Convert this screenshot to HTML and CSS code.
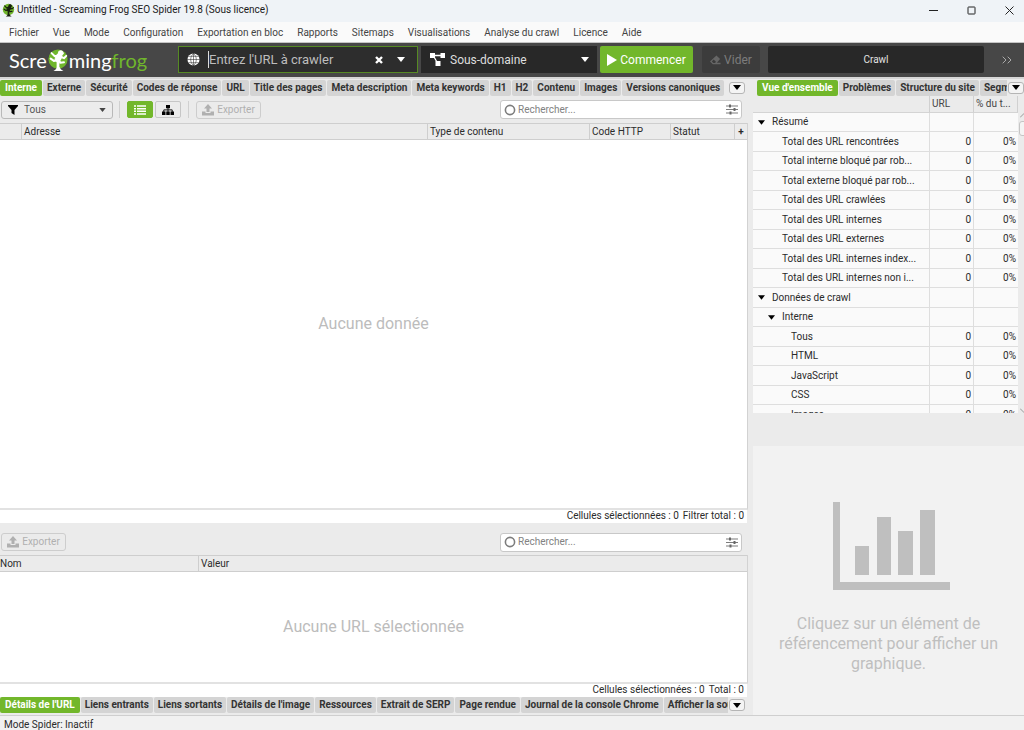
FILE: index.html
```html
<!DOCTYPE html>
<html lang="fr">
<head>
<meta charset="utf-8">
<title>Untitled - Screaming Frog SEO Spider 19.8 (Sous licence)</title>
<link rel="stylesheet" href="styles.css">
</head>
<body>
<svg class="defs" aria-hidden="true">
  <symbol id="frog" viewBox="0 0 24 24">
    <circle cx="12" cy="11" r="10.500" fill="#70b62c"/>
    <g class="frog-body" stroke-linecap="round" stroke-linejoin="round">
      <ellipse cx="12.500" cy="9.500" rx="3" ry="4.800" transform="rotate(28 12.500 9.500)"/>
      <circle cx="15" cy="4.500" r="2.700"/>
      <path fill="none" stroke-width="2.200" d="M12 7L8.500 8 5 4.500M15 8.500l3.500 1.500 2.500-2.500M11 12l-3.500 1-3.500-2.500M13 12l1.500 3 4-.5"/>
      <path fill="none" stroke-width="3" d="M12 12v9"/>
      <path stroke="none" d="M7 24c2-1 3-2 4-4h3c.5 2 2 3 4 4z"/>
    </g>
  </symbol>
  <symbol id="down" viewBox="0 0 8 5"><path fill="currentColor" d="M0 0h8L4 5z"/></symbol>
  <symbol id="export" viewBox="0 0 12 12"><path fill="currentColor" d="M6 0l4 4.500H7.500V8h-3V4.500H2zM0 7.500h3.500V9h5V7.500H12V11.500H0z"/></symbol>
  <symbol id="ring" viewBox="0 0 12 12"><circle cx="6" cy="6" r="4.600" fill="none" stroke="#7d7d7d" stroke-width="1.600"/></symbol>
  <symbol id="sliders" viewBox="0 0 12 11"><path stroke="#7d7d7d" stroke-width="1.100" fill="none" d="M0 2h12M0 5.500h12M0 9h12"/><path stroke="#666" stroke-width="2" d="M4 .5v3M8.500 4v3M4.500 7.500v3"/></symbol>
</svg>

<header class="titlebar">
  <svg class="app-icon"><use href="#frog"/></svg>
  <span class="app-title">Untitled - Screaming Frog SEO Spider 19.8 (Sous licence)</span>
  <div class="window-buttons">
    <button aria-label="Réduire"><svg viewBox="0 0 9 9"><path d="M0 4.500h9"/></svg></button>
    <button aria-label="Agrandir"><svg viewBox="0 0 9 9"><rect x="1" y="1" width="7" height="7" rx=".5"/></svg></button>
    <button aria-label="Fermer"><svg viewBox="0 0 9 9"><path d="M.5.500l8 8M8.500.500l-8 8"/></svg></button>
  </div>
</header>

<nav class="menubar">
  <button>Fichier</button><button>Vue</button><button>Mode</button><button>Configuration</button><button>Exportation en bloc</button><button>Rapports</button><button>Sitemaps</button><button>Visualisations</button><button>Analyse du crawl</button><button>Licence</button><button>Aide</button>
</nav>

<div class="crawlbar">
  <div class="logo"><span>Scre</span><svg class="logo-frog"><use href="#frog"/></svg><span>ming</span><span class="logo-green">frog</span></div>
  <div class="url-box">
    <svg class="globe" viewBox="0 0 14 14"><circle cx="7" cy="7" r="6.500" fill="#fff"/><path d="M7 0v14M0 7h14M1.500 3.600h11M1.500 10.400h11M7 .5c-4 3.500-4 9.500 0 13M7 .5c4 3.500 4 9.500 0 13" fill="none" stroke="#2d2d2d" stroke-width=".6"/></svg>
    <input type="text" aria-label="URL à crawler" placeholder="Entrez l'URL à crawler">
    <button aria-label="Effacer"><svg class="clear" viewBox="0 0 8 8"><path d="M1 1l6 6M7 1L1 7" stroke="#fff" stroke-width="2.400"/></svg></button>
    <button aria-label="Historique"><svg class="arrow"><use href="#down"/></svg></button>
  </div>
  <div class="scope">
    <svg class="scope-icon" viewBox="0 0 15 13"><path d="M3 2.500h9M3.500 3l4 7" stroke="#fff" stroke-width="1.300"/><path fill="#fff" d="M0 0h5v5H0zM10.500 0H15v5h-4.500zM5.500 8h5v5h-5z"/></svg>
    <select aria-label="Périmètre"><option>Sous-domaine</option></select>
    <svg class="arrow"><use href="#down"/></svg>
  </div>
  <button class="start"><svg viewBox="0 0 10 12"><path fill="#fff" d="M0 0l10 6-10 6z"/></svg>Commencer</button>
  <button class="clear-crawl" disabled><svg viewBox="0 0 12 10"><path fill="#666" d="M7 0l4 4-3.500 4H11.500v1.500H3L0 6.500zM2 6.500L3.700 8.200h1.800l1-1.200L4 4.500z" fill-rule="evenodd"/></svg>Vider</button>
  <button class="crawl-mode">Crawl</button>
  <button class="more" aria-label="Plus"><svg viewBox="0 0 10 8"><path d="M.7.700L4 4 .7 7.300M5.700.700L9 4 5.700 7.300"/></svg></button>
</div>

<main class="workspace">
  <section class="left">
    <div class="tabrow">
      <div class="tabs" role="tablist">
        <button role="tab" class="active">Interne</button><button role="tab">Externe</button><button role="tab">Sécurité</button><button role="tab">Codes de réponse</button><button role="tab">URL</button><button role="tab">Title des pages</button><button role="tab">Meta description</button><button role="tab">Meta keywords</button><button role="tab">H1</button><button role="tab">H2</button><button role="tab">Contenu</button><button role="tab">Images</button><button role="tab">Versions canoniques</button>
      </div>
      <button class="tab-more" aria-label="Autres onglets"><svg class="arrow"><use href="#down"/></svg></button>
    </div>
    <div class="tools">
      <div class="filter">
        <svg class="funnel" viewBox="0 0 10 10"><path d="M0 0h10v1L6.500 5v5L3.500 8V5L0 1z"/></svg>
        <select aria-label="Filtre"><option>Tous</option></select>
        <svg class="arrow small"><use href="#down"/></svg>
      </div>
      <div class="view-group">
        <button class="view on" aria-label="Vue liste"><svg viewBox="0 0 12 10"><path stroke="#fff" stroke-width="1.500" d="M0 1h2M0 3.700h2M0 6.300h2M0 9h2M3 1h9M3 3.700h9M3 6.300h9M3 9h9"/></svg></button>
        <button class="view" aria-label="Vue arborescence"><svg viewBox="0 0 12 10"><path d="M4 0h4v3.300H4zM0 6.500h3.500V10H0zM4.250 6.500h3.500V10h-3.500zM8.500 6.500H12V10H8.500z"/><path fill="none" stroke="#111" d="M6 3v4M1.800 7V4.900h8.400V7"/></svg></button>
      </div>
      <button class="export" disabled><svg><use href="#export"/></svg>Exporter</button>
      <div class="search"><svg class="ring"><use href="#ring"/></svg><input type="text" aria-label="Rechercher" placeholder="Rechercher..."><button aria-label="Filtres avancés"><svg class="sliders"><use href="#sliders"/></svg></button></div>
    </div>
    <div class="grid upper">
      <table>
        <colgroup><col class="c-index"><col><col class="c-type"><col class="c-code"><col class="c-status"><col class="c-add"></colgroup>
        <thead><tr><th></th><th>Adresse</th><th>Type de contenu</th><th>Code HTTP</th><th>Statut</th><th class="add">+</th></tr></thead>
      </table>
      <p class="empty">Aucune donnée</p>
    </div>
    <p class="totals"><span>Cellules sélectionnées :&nbsp;0</span><span>Filtrer total :&nbsp;0</span></p>

    <div class="tools lower-tools">
      <button class="export" disabled><svg><use href="#export"/></svg>Exporter</button>
      <div class="search"><svg class="ring"><use href="#ring"/></svg><input type="text" aria-label="Rechercher" placeholder="Rechercher..."><button aria-label="Filtres avancés"><svg class="sliders"><use href="#sliders"/></svg></button></div>
    </div>
    <div class="grid lower">
      <table>
        <colgroup><col class="c-name"><col></colgroup>
        <thead><tr><th class="flush">Nom</th><th>Valeur</th></tr></thead>
      </table>
      <p class="empty">Aucune URL sélectionnée</p>
    </div>
    <p class="totals"><span>Cellules sélectionnées :&nbsp;0</span><span>Total :&nbsp;0</span></p>
    <div class="tabrow bottom">
      <div class="tabs" role="tablist">
        <button role="tab" class="active">Détails de l'URL</button><button role="tab">Liens entrants</button><button role="tab">Liens sortants</button><button role="tab">Détails de l'image</button><button role="tab">Ressources</button><button role="tab">Extrait de SERP</button><button role="tab">Page rendue</button><button role="tab">Journal de la console Chrome</button><button role="tab">Afficher la source</button>
      </div>
      <button class="tab-more" aria-label="Autres onglets"><svg class="arrow"><use href="#down"/></svg></button>
    </div>
  </section>

  <aside class="right">
    <div class="tabrow">
      <div class="tabs" role="tablist">
        <button role="tab" class="active">Vue d'ensemble</button><button role="tab">Problèmes</button><button role="tab">Structure du site</button><button role="tab">Segments</button>
      </div>
      <button class="tab-more" aria-label="Autres onglets"><svg class="arrow"><use href="#down"/></svg></button>
    </div>
    <div class="overview">
      <table>
        <colgroup><col><col class="c-num"><col class="c-num"></colgroup>
        <thead><tr><th></th><th>URL</th><th>% du t...</th></tr></thead>
        <tbody>
          <tr><td><svg class="arrow tree"><use href="#down"/></svg>Résumé</td><td></td><td></td></tr>
          <tr><td class="l2">Total des URL rencontrées</td><td>0</td><td>0%</td></tr>
          <tr><td class="l2">Total interne bloqué par rob...</td><td>0</td><td>0%</td></tr>
          <tr><td class="l2">Total externe bloqué par rob...</td><td>0</td><td>0%</td></tr>
          <tr><td class="l2">Total des URL crawlées</td><td>0</td><td>0%</td></tr>
          <tr><td class="l2">Total des URL internes</td><td>0</td><td>0%</td></tr>
          <tr><td class="l2">Total des URL externes</td><td>0</td><td>0%</td></tr>
          <tr><td class="l2">Total des URL internes index...</td><td>0</td><td>0%</td></tr>
          <tr><td class="l2">Total des URL internes non i...</td><td>0</td><td>0%</td></tr>
          <tr><td><svg class="arrow tree"><use href="#down"/></svg>Données de crawl</td><td></td><td></td></tr>
          <tr><td class="l1"><svg class="arrow tree"><use href="#down"/></svg>Interne</td><td></td><td></td></tr>
          <tr><td class="l3">Tous</td><td>0</td><td>0%</td></tr>
          <tr><td class="l3">HTML</td><td>0</td><td>0%</td></tr>
          <tr><td class="l3">JavaScript</td><td>0</td><td>0%</td></tr>
          <tr><td class="l3">CSS</td><td>0</td><td>0%</td></tr>
          <tr><td class="l3">Images</td><td>0</td><td>0%</td></tr>
        </tbody>
      </table>
      <div class="scrollbar">
        <svg viewBox="0 0 8 5"><path d="M0 4.500l4-4 4 4"/></svg>
        <span class="thumb"></span>
        <svg viewBox="0 0 8 5"><path d="M0 .5l4 4 4-4"/></svg>
      </div>
    </div>
    <div class="chart-empty">
      <svg viewBox="0 0 117 88"><path d="M0 0h7v80h110v8H0zM22 44h14v29H22zM44 15h14v58H44zM65 29h15v44H65zM87 8h15v65H87z"/></svg>
      <p>Cliquez sur un élément de référencement pour afficher un graphique.</p>
    </div>
  </aside>
</main>
<footer class="statusbar">Mode Spider: Inactif</footer>
</body>
</html>
```
FILE: styles.css
```css
* { box-sizing: border-box; }
html, body { height: 100%; }
body {
  margin: 0;
  display: flex;
  flex-direction: column;
  overflow: hidden;
  background: #ebebeb;
  color: #2b2b2b;
  font: 10px/12px Roboto, "Liberation Sans", sans-serif;
}
p { margin: 0; }
button, input, select { font: inherit; color: inherit; margin: 0; padding: 0; border: 0; background: none; }
select { appearance: none; }
input { min-width: 0; outline: none; }
svg { display: block; flex: none; }
.defs { position: absolute; width: 0; height: 0; }
.arrow { width: 8px; height: 5px; color: #000; }
.arrow.small { width: 7px; height: 4px; color: #444; }
.frog-body { fill: var(--frog, #fff); stroke: var(--frog, #fff); }

.titlebar { display: flex; align-items: center; height: 22px; flex: none; padding: 0 10px 2px 2px; background: #eff3f7; }
.app-icon { --frog: #182010; width: 13px; height: 14px; }
.app-title { margin-left: 2px; color: #1a1a1a; }
.window-buttons { display: flex; gap: 29px; margin-left: auto; }
.window-buttons svg { width: 9px; height: 9px; fill: none; stroke: #222; }

.menubar { display: flex; gap: 14px; height: 21px; flex: none; padding: 2px 9px 0; background: #fafafa; border-bottom: 1px solid #c4c4c4; color: #444; }

.crawlbar { display: flex; align-items: center; height: 36px; flex: none; padding: 0 12px 1px 9px; background: #474747; border-bottom: 2px solid #d6d6d6; font-size: 12px; line-height: 16px; }
.logo { display: flex; align-items: center; width: 169px; font: 20px/26px Lato, sans-serif; color: #fff; }
.logo-frog { width: 22px; height: 24px; }
.logo-green { color: #70b62c; }
.url-box { display: flex; align-items: center; width: 240px; height: 27px; padding: 0 12px 0 8px; background: #2d2d2d; border: 1px solid #568a24; font-size: 13px; }
.globe { width: 13px; height: 13px; margin-right: 8px; }
.url-box input { flex: 1; height: 17px; border-left: 1px solid #ddd; color: #eee; }
.url-box input::placeholder { color: #bdbdbd; opacity: 1; }
.clear { width: 8px; height: 8px; margin-right: 14px; }
.crawlbar .arrow { color: #fff; }
.scope { display: grid; grid-template-columns: 1fr; align-items: center; width: 176px; height: 27px; margin-left: 3px; background: #282828; color: #ddd; }
.scope > *, .filter > * { grid-area: 1 / 1; }
.scope select { height: 27px; padding-left: 29px; }
.scope-icon { width: 15px; height: 13px; margin-left: 9px; pointer-events: none; }
.scope .arrow, .filter .arrow { justify-self: end; margin-right: 8px; pointer-events: none; }
.filter .arrow { margin-right: 6px; }
.start, .clear-crawl { display: flex; align-items: center; justify-content: center; gap: 3px; height: 27px; border-radius: 2px; }
.start { width: 93px; margin-left: 3px; background: #72b72b; color: #fff; }
.start svg { width: 10px; height: 12px; }
.clear-crawl { width: 58px; margin-left: 9px; background: #3c3c3c; color: #7c7c7c; }
.clear-crawl svg { width: 11px; height: 10px; }
.crawl-mode { flex: 1; height: 27px; margin: 0 18px 0 8px; border-radius: 2px; background: #282828; color: #e2e2e2; font-size: 10px; }
.more svg { width: 10px; height: 8px; fill: none; stroke: #aaa; }

.workspace { display: grid; grid-template-columns: minmax(0, 1fr) 271px; column-gap: 5px; flex: 1; min-height: 0; }
.left, .right { display: flex; flex-direction: column; min-width: 0; min-height: 0; }
.tabrow { display: flex; align-items: center; flex: none; height: 17px; padding-right: 3px; }
.tabrow.bottom { height: 18px; padding-bottom: 2px; }
.right .tabrow { padding: 0 0 0 4px; }
.tabs { display: flex; gap: 1px; flex: 1; min-width: 0; height: 16px; overflow: hidden; }
.tabs button { flex: none; padding: 0 4px; background: #d4d4d4; border-radius: 2px; font-weight: 700; white-space: nowrap; color: #333; }
.tabs .active { padding: 0 5px; background: #72b72b; color: #fff; }
.tab-more { display: flex; align-items: center; justify-content: center; width: 16px; height: 12px; margin-left: 1px; border: 1px solid #b5b5b5; border-radius: 3px; background: #f4f4f4; }

.tools { display: flex; align-items: center; flex: none; height: 27px; padding: 0 6px 0 1px; }
.lower-tools { height: 32px; padding-top: 6px; }
.filter { display: grid; align-items: center; width: 112px; height: 18px; border: 1px solid #b9b9b9; border-radius: 3px; background: #ececec; color: #555; }
.filter select { height: 16px; padding-left: 22px; }
.funnel { width: 10px; height: 10px; margin-left: 6px; pointer-events: none; }
.view-group { display: flex; gap: 2px; margin: 0 7px 0 6px; padding: 0 7px; border: solid #d0d0d0; border-width: 0 1px; height: 17px; }
.view { display: flex; align-items: center; justify-content: center; width: 26px; border: 1px solid #c6c6c6; border-radius: 2px; }
.view.on { background: #72b72b; border-color: #72b72b; }
.view svg { width: 12px; height: 10px; }
.export { display: flex; align-items: center; justify-content: center; gap: 3px; width: 65px; height: 18px; border: 1px solid #cdcdcd; border-radius: 3px; color: #b0b0b0; }
.export svg { width: 12px; height: 12px; }
.search { display: flex; align-items: center; width: 242px; height: 19px; margin-left: auto; padding: 0 3px; border: 1px solid #c8c8c8; border-radius: 3px; background: #fff; }
.search input { flex: 1; padding-left: 2px; }
.search input::placeholder { color: #828282; opacity: 1; }
.ring { width: 12px; height: 12px; }
.sliders { width: 12px; height: 11px; }

table { width: 100%; table-layout: fixed; border-collapse: separate; border-spacing: 0; }
th { height: 17px; padding: 0 2px; text-align: left; font-weight: 400; white-space: nowrap; }
.grid { display: flex; flex-direction: column; min-height: 0; border-right: 1px solid #d2d2d2; border-bottom: 2px solid #e2e2e2; background: #fff; }
.upper { flex: 388 0 0; }
.lower { flex: 128 0 0; }
.grid th { background: #ebebeb; border: solid #cecece; border-width: 1px 1px 1px 0; }
.grid th:last-child { border-right: 0; }
.grid .flush { padding-left: 0; }
.grid .add { padding: 0; text-align: center; font-weight: 700; line-height: 10px; }
.c-index { width: 22px; }
.c-type { width: 162px; }
.c-code { width: 81px; }
.c-status { width: 64px; }
.c-add { width: 12px; }
.c-name { width: 199px; }
.empty { flex: 1; display: flex; align-items: center; justify-content: center; color: #bcbcbc; font-size: 16px; line-height: 20px; }
.totals { display: flex; justify-content: flex-end; gap: 4px; flex: none; height: 13px; padding-right: 3px; margin-right: 1px; background: #fff; white-space: nowrap; }

.overview { display: flex; flex: none; height: 317px; overflow: hidden; }
.overview table { flex: 1; width: auto; align-self: flex-start; }
.overview th { height: 17px; border-right: 1px solid #d0d0d0; border-bottom: 1px solid #d4d4d4; color: #444; }
.overview td { height: 19px; padding: 0 2px 0 5px; background: #fafafa; border-right: 1px solid #dedede; border-bottom: 1px solid #dedede; white-space: nowrap; overflow: hidden; }
.overview tr:nth-child(even) td { height: 20px; }
.overview td:not(:first-child) { text-align: right; }
.overview td:last-child { border-right: 0; }
.overview .l1 { padding-left: 15px; }
.overview .l2 { padding-left: 29px; }
.overview .l3 { padding-left: 38px; }
.tree { display: inline-block; width: 7px; margin-right: 7px; vertical-align: middle; }
.c-num { width: 44px; }
.scrollbar { display: flex; flex-direction: column; width: 6px; padding-top: 17px; overflow: hidden; }
.scrollbar svg { width: 8px; height: 5px; margin-left: 2px; fill: none; stroke: #999; }
.thumb { width: 10px; height: 15px; margin: 3px 0 auto 1px; border: 1px solid #c4c4c4; border-radius: 3px; background: #f4f4f4; }
.chart-empty { flex: 1; display: flex; flex-direction: column; align-items: center; margin-top: 33px; padding: 56px 20px 0; background: #f2f2f2; color: #bfbfbf; text-align: center; font-size: 16px; line-height: 20px; }
.chart-empty svg { width: 117px; height: 88px; margin: 0 0 24px 6px; fill: #bfbfbf; }
.statusbar { flex: none; height: 15px; padding: 2px 4px 0; border-top: 1px solid #cfcfcf; background: #f1f1f1; line-height: 14px; }
```
